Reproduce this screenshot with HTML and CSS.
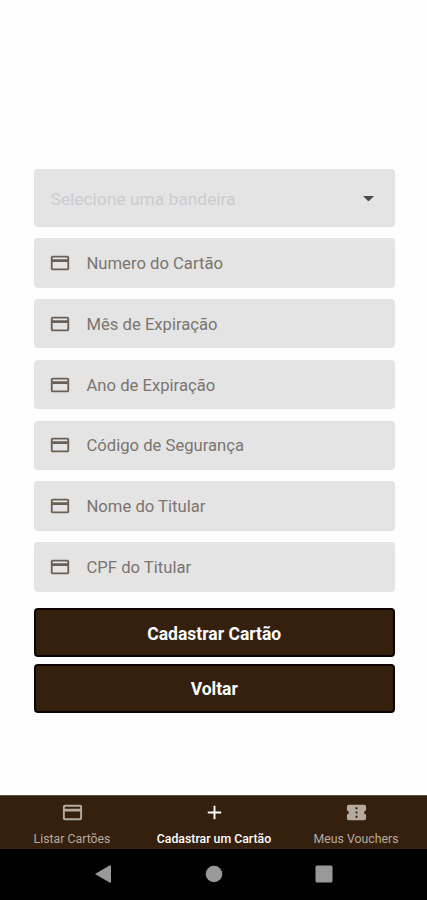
FILE: index.html
```html
<!DOCTYPE html>
<html lang="pt-BR">
<head>
<meta charset="utf-8">
<title>Cadastrar um Cartão</title>
<link rel="stylesheet" href="styles.css">
</head>
<body>
<svg class="defs" aria-hidden="true">
  <symbol id="card" viewBox="0 0 24 24"><path d="M20 4H4C2.9 4 2 4.9 2 6V18C2 19.1 2.9 20 4 20H20C21.1 20 22 19.1 22 18V6C22 4.9 21.1 4 20 4ZM20 18H4V11H20V18ZM20 8H4V6H20V8Z" fill-rule="evenodd"/></symbol>
</svg>
<main class="form">
  <div class="select"><span>Selecione uma bandeira</span><svg class="caret" viewBox="0 0 10 5"><path d="M0 0H10L5 5Z"/></svg></div>
  <div class="field"><svg class="icon"><use href="#card"/></svg><span>Numero do Cartão</span></div>
  <div class="field"><svg class="icon"><use href="#card"/></svg><span>Mês de Expiração</span></div>
  <div class="field"><svg class="icon"><use href="#card"/></svg><span>Ano de Expiração</span></div>
  <div class="field"><svg class="icon"><use href="#card"/></svg><span>Código de Segurança</span></div>
  <div class="field"><svg class="icon"><use href="#card"/></svg><span>Nome do Titular</span></div>
  <div class="field"><svg class="icon"><use href="#card"/></svg><span>CPF do Titular</span></div>
  <div class="actions">
    <button class="button">Cadastrar Cartão</button>
    <button class="button">Voltar</button>
  </div>
</main>
<nav class="tabs">
  <div class="tab"><svg class="tab-icon"><use href="#card"/></svg><span>Listar Cartões</span></div>
  <div class="tab active"><svg class="tab-icon" viewBox="0 0 24 24"><path d="M19 13H13V19H11V13H5V11H11V5H13V11H19Z"/></svg><span>Cadastrar um Cartão</span></div>
  <div class="tab"><svg class="tab-icon" viewBox="0 0 24 24"><path fill-rule="evenodd" d="M4 4A2 2 0 0 0 2 6V10A2 2 0 0 1 2 14V18A2 2 0 0 0 4 20H20A2 2 0 0 0 22 18V14A2 2 0 0 1 22 10V6A2 2 0 0 0 20 4ZM11 6.5H13V8.5H11ZM11 11H13V13H11ZM11 15.5H13V17.5H11Z"/></svg><span>Meus Vouchers</span></div>
</nav>
<footer class="system">
  <svg viewBox="0 0 24 24"><path d="M3 12L17.5 3.6Q19 2.8 19 4.6V19.4Q19 21.2 17.5 20.4Z"/></svg>
  <svg viewBox="0 0 24 24"><circle cx="12" cy="12" r="8.3"/></svg>
  <svg viewBox="0 0 24 24"><rect x="3.5" y="3.5" width="17" height="17" rx="1.5"/></svg>
</footer>
</body>
</html>
```
FILE: styles.css
```css
* { box-sizing: border-box; }
body {
  margin: 0;
  width: 427px;
  height: 900px;
  display: flex;
  flex-direction: column;
  background: #fefefe;
  font-family: Roboto, "Liberation Sans", sans-serif;
  overflow: hidden;
}
.defs { position: absolute; width: 0; height: 0; }
svg { display: block; fill: currentColor; flex: none; }
.form {
  flex: 1;
  padding: 169.4px 32px 0 33.5px;
  display: flex;
  flex-direction: column;
  gap: 11.4px;
}
.select, .field {
  display: flex;
  align-items: center;
  border-radius: 4px;
  background: #e4e4e4;
  font-size: 16.65px;
  white-space: nowrap;
}
.select {
  height: 57.5px;
  padding: 0 21px 0 17px;
  justify-content: space-between;
  color: #cbccd0;
  font-size: 17.4px;
}
.select span { padding-top: 1px; }
.caret { width: 11px; height: 5.5px; margin-top: 1px; color: #4b4b4b; }
.field {
  height: 49.4px;
  padding-left: 15.6px;
  gap: 15.4px;
  color: #7b7570;
}
.field span { padding-top: 1px; }
.icon { width: 22px; height: 22px; color: #6b6055; }
.actions {
  display: flex;
  flex-direction: column;
  gap: 6.5px;
  margin-top: 5px;
}
.button {
  height: 49.2px;
  padding: 2px 0 0;
  border: 2px solid #0d0400;
  border-radius: 4px;
  background: #35200d;
  color: #fff;
  font: 700 17.5px Roboto, "Liberation Sans", sans-serif;
}
.tabs {
  height: 54px;
  flex: none;
  display: grid;
  grid-template-columns: repeat(3, 1fr);
  padding-left: 1px;
  border-top: 1px solid #5b5145;
  background: #35200d;
}
.tab {
  display: flex;
  flex-direction: column;
  align-items: center;
  padding-top: 5px;
  gap: 8px;
  color: #b5aaa0;
  font-size: 12.3px;
  line-height: 14px;
  white-space: nowrap;
}
.tab-icon { width: 23px; height: 23px; }
.active { color: #fff; font-weight: 500; }
.system {
  height: 51px;
  flex: none;
  display: flex;
  justify-content: center;
  gap: 86px;
  padding-top: 13px;
  background: #000;
  color: #999;
}
.system svg { width: 24px; height: 24px; }
```
